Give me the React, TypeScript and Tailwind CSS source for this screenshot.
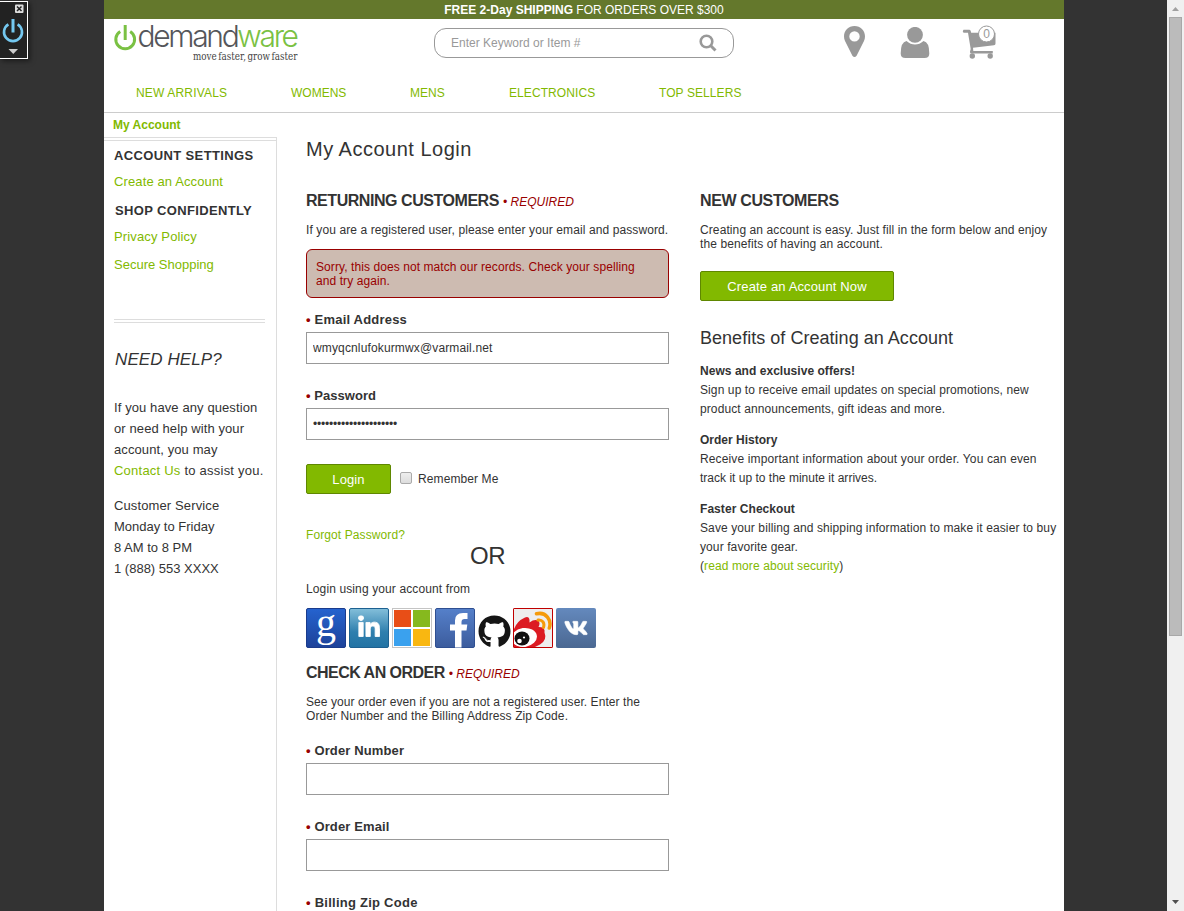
import React from "react";
import { FaGithub, FaLinkedinIn, FaVk } from "react-icons/fa";

const inputClass =
  "mt-[5px] block h-8 w-[363px] border border-[#999] bg-white px-1.5 text-xs text-[#333] outline-none";
const buttonClass =
  "h-[30px] rounded-xs border border-[#5f8700] bg-[#82b900] pt-px text-[13px] text-white";

type FieldProps = { label: string; value?: string; labelSpacing?: string; inputSpacing?: string };

function Field({ label, value = "", labelSpacing = "tracking-[0.2px]", inputSpacing = "tracking-[0.14px]" }: FieldProps) {
  return (
    <div className="mb-6">
      <div className={"h-[15px] text-[13px] leading-[15px] font-bold " + labelSpacing}>
        <span className="text-[#900]">•</span> {label}
      </div>
      <input type="text" defaultValue={value} className={inputClass + " " + inputSpacing} />
    </div>
  );
}

function Required() {
  return <span className="text-xs font-normal tracking-normal text-[#900] italic">• REQUIRED</span>;
}

function Logo() {
  return (
    <svg width="190" height="44" viewBox="0 0 190 44" className="mt-[3px] ml-[9px] shrink-0 overflow-visible">
      <g fill="none" stroke="#7ac143" strokeWidth="3">
        <path d="M7.2 9.4 A9.4 9.4 0 1 0 17.2 9.4" />
        <path d="M12.2 3 V18" />
      </g>
      <text x="24.5" y="25" textLength="161.500" lengthAdjust="spacing" className="font-['Inter'] text-[30px] font-light" fill="#55565a">
        demand<tspan fill="#7ac143">ware</tspan>
      </text>
      <text x="80" y="38" textLength="104.500" lengthAdjust="spacingAndGlyphs" className="font-['DejaVu_Serif'] text-[10.5px]" fill="#444" wordSpacing="-1.5">
        move faster, grow faster
      </text>
    </svg>
  );
}

function ToolkitWidget() {
  return (
    <div className="absolute top-px left-0 h-[58px] w-7 border border-l-0 border-white bg-[#222] shadow-[2px_2px_5px_rgba(0,0,0,0.5)]">
      <svg width="27" height="56" viewBox="0 0 27 56">
        <rect x="15" y="2.500" width="8.500" height="8.500" rx="1" fill="#ddd" />
        <path d="M17 4.500 L21.500 9 M21.500 4.500 L17 9" stroke="#222" strokeWidth="1.500" />
        <g fill="none" stroke="#74c8f0" strokeWidth="2.600">
          <path d="M8.400 22.400 A9 9 0 1 0 17.600 22.400" />
          <path d="M13 17 V30.500" strokeWidth="3" />
        </g>
        <path d="M8.500 47 H18 L13.250 52Z" fill="#ccc" />
      </svg>
    </div>
  );
}

function Scrollbar() {
  return (
    <div className="flex h-full w-[17px] flex-col items-center bg-[#f0f0f0]">
      <svg width="17" height="17" viewBox="0 0 17 17"><path d="M5 11 L8.500 7 L12 11Z" fill="#a0a0a0" /></svg>
      <div className="h-[619px] w-[13px] border border-[#a8a8a8] bg-[#bbb]" />
      <svg className="mt-auto" width="17" height="17" viewBox="0 0 17 17"><path d="M5 6 H12 L8.500 10Z" fill="#505050" /></svg>
    </div>
  );
}

function SocialIcons() {
  return (
    <div className="mt-3 flex items-end gap-[3px]">
      <svg width="40" height="40" viewBox="0 0 40 40" className="overflow-visible">
        <defs>
          <linearGradient id="gg" x2="0" y2="1"><stop stopColor="#2563cf" /><stop offset="1" stopColor="#1d4299" /></linearGradient>
          <linearGradient id="li" x2="0" y2="1"><stop stopColor="#84bfda" /><stop offset=".6" stopColor="#2f7fae" /><stop offset="1" stopColor="#2273a4" /></linearGradient>
          <linearGradient id="fb" x2="0" y2="1"><stop stopColor="#5580ca" /><stop offset="1" stopColor="#3c5c9d" /></linearGradient>
          <linearGradient id="vk" x2="0" y2="1"><stop stopColor="#6489bd" /><stop offset="1" stopColor="#4b6892" /></linearGradient>
        </defs>
        <rect x=".5" y=".5" width="39" height="39" rx="1.500" fill="url(#gg)" stroke="#1a3b8c" />
        <text x="20" y="27.500" textAnchor="middle" fill="#fff" className="font-['Liberation_Serif'] text-[40px]">g</text>
      </svg>
      <svg width="40" height="40" viewBox="0 0 40 40">
        <rect x=".5" y=".5" width="39" height="39" rx="1.500" fill="url(#li)" stroke="#1d6191" />
        <FaLinkedinIn x="8" y="7.500" size={24} color="#fff" stroke="#fff" strokeWidth="18" />
      </svg>
      <svg width="40" height="40" viewBox="0 0 40 40">
        <rect x=".5" y=".5" width="39" height="39" fill="#fff" stroke="#c4c4c4" />
        <path d="M2 2 H19 V19 H2Z" fill="#e84e17" />
        <path d="M21 2 H38 V19 H21Z" fill="#86b91e" />
        <path d="M2 21 H19 V38 H2Z" fill="#3aa1ee" />
        <path d="M21 21 H38 V38 H21Z" fill="#f9b711" />
      </svg>
      <svg width="40" height="40" viewBox="0 0 40 40">
        <rect x=".5" y=".5" width="39" height="39" rx="1.500" fill="url(#fb)" stroke="#2f4f91" />
        <path d="M20 39.500 V22.500 H15 V16.500 H20 V12.500 Q20 5 28 5 H32.500 V11 H29.500 Q26.500 11 26.500 14 V16.500 H32.300 L31.500 22.500 H26.500 V39.500Z" fill="#fff" />
      </svg>
      <FaGithub size={33} color="#151515" className="-mr-px" />
      <svg width="40" height="40" viewBox="0 0 40 40">
        <rect x=".5" y=".5" width="39" height="39" rx="1" fill="#eee" stroke="#c00000" />
        <path d="M1 21 Q4 13 12 9.500 Q16 8 16.500 12 V14.500 Q22 10.500 25.500 13 Q27.500 15 25.500 19 Q32.500 19 31.500 24.500 Q34.500 32 27 36.500 L22 39 H1Z" fill="#dc1b23" />
        <ellipse cx="11" cy="29.500" rx="13" ry="9.500" transform="rotate(-8 11 29.500)" fill="#fff" />
        <path d="M1 39 V36 Q8 41.500 18 39Z" fill="#dc1b23" />
        <ellipse cx="9" cy="30.500" rx="7.500" ry="7" fill="#111" />
        <circle cx="6.500" cy="33" r="2.300" fill="#fff" />
        <circle cx="11" cy="29.500" r="1.100" fill="#fff" />
        <g fill="none" stroke="#f59b0b" strokeLinecap="round">
          <path d="M23.500 5.800 C33 3.500 39 12 36.300 20" strokeWidth="3.500" />
          <path d="M25 12 C29.500 11.500 32 15 30.500 19.500" strokeWidth="3" />
        </g>
        <rect x=".5" y=".5" width="39" height="39" rx="1" fill="none" stroke="#c00000" />
      </svg>
      <svg width="40" height="40" viewBox="0 0 40 40">
        <rect width="40" height="40" rx="2" fill="url(#vk)" />
        <FaVk x="8" y="8" size={24} color="#fff" stroke="#fff" strokeWidth="14" />
      </svg>
    </div>
  );
}

export default function App() {
  return (
    <div className="relative flex h-[911px] w-[1184px] overflow-hidden bg-[#333] font-['Liberation_Sans',Arial,sans-serif] text-xs leading-[14px] text-[#333]">
      <div className="w-[104px] shrink-0" />
      <div className="mr-[103px] h-full w-[960px] shrink-0 overflow-hidden bg-white">
        <div className="h-[19px] bg-[#64782c] pt-[3px] text-center text-white">
          <b>FREE 2-Day SHIPPING</b> FOR ORDERS OVER $300
        </div>
        <header className="h-[94px] border-b border-[#ccc]">
          <div className="flex h-[60px] items-start">
            <Logo />
            <div className="mt-[9px] ml-[131px] flex h-[30px] w-[300px] shrink-0 items-center justify-between rounded-xl border border-[#999] px-4 text-[#999]">
              <span>Enter Keyword or Item #</span>
              <svg width="18" height="18" viewBox="0 0 18 18" fill="none" stroke="#999">
                <circle cx="7.500" cy="7.500" r="5.800" strokeWidth="2.600" />
                <path d="M11.800 11.800 L16.500 16.500" strokeWidth="3" />
              </svg>
            </div>
            <svg className="mt-[7px] ml-[110px]" width="21" height="32" viewBox="0 0 21 32">
              <path fillRule="evenodd" d="M10.500 0 C16.500 0 21 4.500 21 10.300 C21 12 20.700 13.400 20 14.900 L12.600 29.700 Q10.500 32.300 8.400 29.700 L1 14.900 C.3 13.400 0 12 0 10.300 C0 4.500 4.500 0 10.500 0Z M10.500 5.200 A5.200 5.200 0 1 0 10.500 15.600 A5.200 5.200 0 1 0 10.500 5.200Z" fill="#999" />
            </svg>
            <svg className="mt-2 ml-[35px]" width="30" height="32" viewBox="0 0 30 32" fill="#999">
              <circle cx="15" cy="7.800" r="7.900" />
              <path d="M6.500 14 Q10.500 17.500 15 17.500 Q19.500 17.500 23.500 14 Q29.300 15 29.300 26.500 Q29.300 31 24.500 31 H5.500 Q.7 31 .7 26.500 Q.7 15 6.500 14Z" />
            </svg>
            <svg className="mt-[5px] ml-[31px]" width="36" height="36" viewBox="0 0 36 36">
              <g fill="#999">
                <path d="M2.500 5.800 H8.500 Q9.800 5.800 10.200 8.800 H34.500 V19.500 Q34.500 21 33 21.200 L12 23.800 L12.300 27 H31.800 V29.500 H9.800 Q9 29.500 9 27.500 L9.700 25 L7 8.800 H2.500 Q1 7.300 2.500 5.800Z" />
                <circle cx="11.300" cy="32" r="2.700" />
                <circle cx="29.200" cy="32" r="2.700" />
              </g>
              <circle cx="25.500" cy="10" r="8" fill="#fff" stroke="#999" />
              <text x="25.500" y="14.300" textAnchor="middle" fill="#999" className="text-xs">0</text>
            </svg>
          </div>
          <nav className="mt-[7px] flex gap-16 pl-8 whitespace-nowrap text-[#82b900]">
            <a className="w-[91px] tracking-[0.17px]">NEW ARRIVALS</a>
            <a className="w-[55px]">WOMENS</a>
            <a className="w-[35px]">MENS</a>
            <a className="w-[86px] tracking-[0.08px]">ELECTRONICS</a>
            <a className="tracking-[0.08px]">TOP SELLERS</a>
          </nav>
        </header>
        <div className="flex">
          <aside className="w-[173px] shrink-0 text-[13px]">
            <div className="h-6 pt-[5px] pl-[9px] text-xs leading-[14px] font-bold text-[#82b900]">My Account</div>
            <div className="h-[774px] border-t border-r border-[#ddd] pt-0.5">
              <div className="border-t border-[#ddd] pt-[7px] pr-[11px] pl-2.5 leading-[15px]">
                <div className="font-bold tracking-[0.37px]">ACCOUNT SETTINGS</div>
                <a className="mt-[11px] block tracking-[0.12px] text-[#82b900]">Create an Account</a>
                <div className="mt-3.5 pl-px font-bold tracking-[0.35px]">SHOP CONFIDENTLY</div>
                <a className="mt-[11px] block tracking-[0.14px] text-[#82b900]">Privacy Policy</a>
                <a className="mt-[13px] block text-[#82b900]">Secure Shopping</a>
                <div className="mt-[47px] h-1 border-y border-[#ddd]" />
                <div className="mt-[27px] pl-px text-[17px] leading-5 tracking-[0.1px] italic">NEED HELP?</div>
                <div className="mt-[27px] leading-[21px] tracking-[0.1px] whitespace-nowrap">
                  If you have any question<br />or need help with your<br />account, you may<br />
                  <span className="tracking-[0.23px]"><a className="text-[#82b900]">Contact Us</a> to assist you.</span>
                </div>
                <div className="mt-3.5 leading-[21px]">
                  <span className="tracking-[0.12px]">Customer Service</span><br />Monday to Friday<br />8 AM to 8 PM<br />1 (888) 553 XXXX
                </div>
              </div>
            </div>
          </aside>
          <main className="ml-[29px] w-[758px]">
            <h1 className="mt-6 text-[20px] leading-6 tracking-[0.5px]">My Account Login</h1>
            <div className="mt-[31px] flex">
              <section className="w-[363px] shrink-0 tracking-[0.1px]">
                <h2 className="text-base leading-[18px] font-bold tracking-[-0.45px]">
                  RETURNING CUSTOMERS <Required />
                </h2>
                <p className="mt-[13px] whitespace-nowrap">If you are a registered user, please enter your email and password.</p>
                <div className="mt-3 mb-3.5 h-[49px] rounded-md border border-[#900] bg-[#cdbbb1] px-[9px] pt-2.5 tracking-[0.08px] text-[#900]">
                  Sorry, this does not match our records. Check your spelling<br />and try again.
                </div>
                <Field label="Email Address" value="wmyqcnlufokurmwx@varmail.net" />
                <Field label="Password" value="•••••••••••••••••••••" labelSpacing="tracking-[0.05px]" inputSpacing="tracking-[-0.2px]" />
                <div className="flex items-center">
                  <button className={buttonClass + " w-[85px]"}>Login</button>
                  <span className="mr-1.5 mb-0.5 ml-[9px] h-3 w-3 rounded-xs border border-[#aaa] bg-linear-to-b from-[#eee] to-[#ddd]" />
                  <span>Remember Me</span>
                </div>
                <a className="mt-[34px] block text-[#82b900]">Forgot Password?</a>
                <div className="text-center text-[24px] leading-7 tracking-tight">OR</div>
                <div className="mt-3 tracking-[0.12px]">Login using your account from</div>
                <SocialIcons />
                <h2 className="mt-4 text-base leading-[18px] font-bold tracking-[-0.52px]">
                  CHECK AN ORDER <Required />
                </h2>
                <p className="mt-[13px] mb-5 tracking-[0.07px] whitespace-nowrap">
                  See your order even if you are not a registered user. Enter the<br /><span className="tracking-[0.1px]">Order Number and the Billing Address Zip Code.</span>
                </p>
                <Field label="Order Number" labelSpacing="tracking-[0.13px]" />
                <Field label="Order Email" labelSpacing="tracking-[0.13px]" />
                <Field label="Billing Zip Code" labelSpacing="tracking-[0.25px]" />
              </section>
              <section className="ml-[31px] w-[364px] shrink-0 tracking-[0.1px]">
                <h2 className="text-base leading-[18px] font-bold tracking-[-0.38px]">NEW CUSTOMERS</h2>
                <p className="mt-[13px] whitespace-nowrap">Creating an account is easy. Just fill in the form below and enjoy<br />the benefits of having an account.</p>
                <button className={buttonClass + " mt-5 w-[194px] tracking-[0.13px]"}>Create an Account Now</button>
                <h3 className="mt-[27px] text-[18px] leading-5 tracking-[0.03px]">Benefits of Creating an Account</h3>
                <div className="mt-3.5 leading-[19px] whitespace-nowrap">
                  <b className="tracking-[0.04px]">News and exclusive offers!</b><br />Sign up to receive email updates on special promotions, new<br />product announcements, gift ideas and more.
                </div>
                <div className="mt-3 leading-[19px] whitespace-nowrap">
                  <b className="tracking-normal">Order History</b><br /><span className="tracking-[0.13px]">Receive important information about your order. You can even</span><br /><span className="tracking-[0.01px]">track it up to the minute it arrives.</span>
                </div>
                <div className="mt-3 leading-[19px] whitespace-nowrap">
                  <b className="tracking-[0.06px]">Faster Checkout</b><br />Save your billing and shipping information to make it easier to buy<br />your favorite gear.<br />(<a className="text-[#82b900]">read more about security</a>)
                </div>
              </section>
            </div>
          </main>
        </div>
      </div>
      <Scrollbar />
      <ToolkitWidget />
    </div>
  );
}
